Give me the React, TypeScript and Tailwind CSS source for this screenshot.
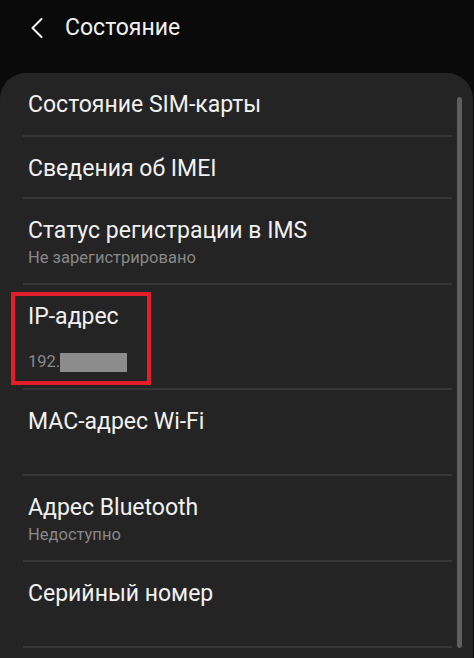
import type { ReactNode } from "react";

const font = { fontFamily: "Roboto, 'Noto Sans', Arial, sans-serif" };

type RowProps = {
  title: string;
  sub?: ReactNode;
  h: string;
  children?: ReactNode;
};

const Row = ({ title, sub, h, children }: RowProps) => (
  <div className={`relative border-b-2 border-[#363636] ${h}`}>
    <div className="pl-[5px] pt-[18px]">
      <div className="text-[23px] leading-[28px] text-[#f1f1f1]">{title}</div>
      {sub}
    </div>
    {children}
  </div>
);

export default function App() {
  return (
    <div
      className="w-[474px] h-[658px] overflow-hidden bg-[#0a0a0a] flex flex-col"
      style={font}
    >
      {/* header */}
      <div className="h-[73px] shrink-0 flex items-start pt-[14px]">
        <svg
          className="ml-[30px] mt-[4px]"
          width="14"
          height="20"
          viewBox="0 0 14 20"
          fill="none"
        >
          <polyline
            points="11.5,1 2.5,10 11.5,19"
            stroke="#f1f1f1"
            strokeWidth="2"
            strokeLinecap="round"
            strokeLinejoin="round"
          />
        </svg>
        <span className="ml-[21px] text-[23px] leading-[28px] text-[#f1f1f1]">
          Состояние
        </span>
      </div>

      {/* card */}
      <div className="flex-1 flex bg-[#242424] rounded-t-[26px] mr-[1px] pl-[23px]">
        <div className="flex-1">
          <Row title="Состояние SIM-карты" h="h-[64px]" />
          <Row title="Сведения об IMEI" h="h-[62px]" />
          <Row
            title="Статус регистрации в IMS"
            h="h-[86px]"
            sub={
              <div className="mt-[3px] text-[16.5px] leading-[20px] text-[#888888]">
                Не зарегистрировано
              </div>
            }
          />
          <Row
            title="IP-адрес"
            h="h-[105px]"
            sub={
              <div className="mt-[21px] flex items-center text-[16.5px] leading-[20px] text-[#888888]">
                <span>192.</span>
                <span className="inline-block w-[67px] h-[19px] bg-[#8c8c8c]" />
              </div>
            }
          >
            <div className="absolute left-[-12px] top-[7px] w-[140px] h-[93px] border-4 border-[#e31e2a]" />
          </Row>
          <Row title="MAC-адрес Wi-Fi" h="h-[86px]" />
          <Row
            title="Адрес Bluetooth"
            h="h-[86px]"
            sub={
              <div className="mt-[3px] text-[16.5px] leading-[20px] text-[#888888]">
                Недоступно
              </div>
            }
          />
          <Row title="Серийный номер" h="h-[86px]" />
        </div>

        {/* scrollbar */}
        <div className="shrink-0 ml-[5px] mr-[11px] mt-[24px] w-[5px] h-[551px] rounded-full bg-[#5e5e5e]" />
      </div>
    </div>
  );
}
